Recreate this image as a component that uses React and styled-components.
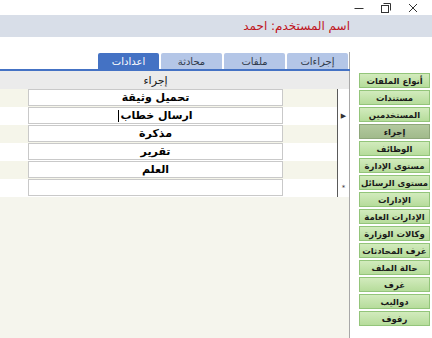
import styled, { createGlobalStyle } from "styled-components";

const GlobalStyle = createGlobalStyle`
  body {
    margin: 0;
    background: #ffffff;
  }
`;

const Window = styled.div`
  width: 432px;
  height: 338px;
  overflow: hidden;
  background: #ffffff;
  font-family: Tahoma, "DejaVu Sans", "Liberation Sans", sans-serif;
  display: flex;
  flex-direction: column;
`;

const TitleBar = styled.div`
  height: 15px;
  display: flex;
  justify-content: flex-end;
  align-items: center;
  padding-right: 14px;
  gap: 17px;
`;

const WinButton = styled.span`
  width: 10px;
  height: 10px;
  display: flex;
  align-items: center;
  justify-content: center;
`;

const UserBar = styled.div`
  height: 22px;
  background: #d8dee8;
  display: flex;
  justify-content: flex-end;
  align-items: center;
  padding-right: 82px;
`;

const UserName = styled.span`
  direction: rtl;
  color: #c0141c;
  font-size: 12px;
`;

const Body = styled.div`
  margin-top: 15px;
  flex: 1;
  display: flex;
`;

const Main = styled.div`
  width: 349px;
  border-right: 1px solid #a8a8a8;
  display: flex;
  flex-direction: column;
  background: #f5f5ed;
`;

const TabRow = styled.div`
  height: 17px;
  background: #ffffff;
  display: flex;
  justify-content: flex-end;
  align-items: flex-end;
  gap: 2px;
  padding-right: 1px;
`;

const Tab = styled.div`
  width: 61px;
  height: 16px;
  border-radius: 2px 2px 0 0;
  background: ${(p) => (p.$active ? "#4472c4" : "#b4c6e7")};
  color: ${(p) => (p.$active ? "#ffffff" : "#2f3a4a")};
  font-size: 10px;
  direction: rtl;
  display: flex;
  align-items: center;
  justify-content: center;
`;

const BlueLine = styled.div`
  height: 2px;
  background: #4472c4;
  margin-right: -1px;
`;

const GridHeader = styled.div`
  height: 18px;
  background: #ebebeb;
  display: flex;
`;

const HeaderCell = styled.div`
  width: 311px;
  direction: rtl;
  font-size: 11px;
  color: #1a1a1a;
  display: flex;
  align-items: center;
  justify-content: center;
`;

const Row = styled.div`
  height: 18px;
  display: flex;
`;

const Cell = styled.div`
  width: 338px;
  background: ${(p) => (p.$odd ? "#f5f5ea" : "#ffffff")};
  border-right: 1px solid #5a5a5a;
  padding-left: 28px;
  box-sizing: border-box;
`;

const TextBox = styled.div`
  width: 255px;
  height: 17px;
  box-sizing: border-box;
  border: 1px solid #c9c9c9;
  background: #ffffff;
  direction: rtl;
  font-size: 11px;
  font-weight: bold;
  color: #000000;
  display: flex;
  align-items: center;
  justify-content: center;
`;

const Caret = styled.span`
  display: inline-block;
  width: 1px;
  height: 12px;
  background: #000000;
  margin-right: 1px;
`;

const RowHead = styled.div`
  flex: 1;
  background: #ffffff;
  display: flex;
  align-items: center;
  justify-content: center;
  font-size: 7px;
  color: #333333;
`;

const Sidebar = styled.div`
  width: 82px;
  padding: 21px 2px 0 9px;
  box-sizing: border-box;
  display: flex;
  flex-direction: column;
  gap: 2px;
`;

const NavButton = styled.div`
  height: 15px;
  box-sizing: border-box;
  border: 1px solid ${(p) => (p.$active ? "#8ea77a" : "#93c57a")};
  background: ${(p) =>
    p.$active
      ? "linear-gradient(#b3c99f, #a1ba8b)"
      : "linear-gradient(#d2ebbd, #b6dc9b)"};
  direction: rtl;
  font-size: 8.5px;
  font-weight: bold;
  color: #1a1a1a;
  display: flex;
  align-items: center;
  justify-content: center;
  white-space: nowrap;
  overflow: hidden;
`;

const tabs = ["اعدادات", "محادثة", "ملفات", "إجراءات"];

const rows = ["تحميل وثيقة", "ارسال خطاب", "مذكرة", "تقرير", "العلم", ""];

const nav = [
  "أنواع الملفات",
  "مستندات",
  "المستخدمين",
  "إجراء",
  "الوظائف",
  "مستوى الإدارة",
  "مستوى الرسائل",
  "الإدارات",
  "الإدارات العامة",
  "وكالات الوزارة",
  "غرف المحادثات",
  "حالة الملف",
  "غرف",
  "دواليب",
  "رفوف",
];

function WindowControls() {
  return (
    <TitleBar>
      <WinButton>
        <svg width="10" height="10" viewBox="0 0 10 10">
          <path d="M0.5 5.5h9" stroke="#333" strokeWidth="1" />
        </svg>
      </WinButton>
      <WinButton>
        <svg width="10" height="10" viewBox="0 0 10 10" fill="none">
          <path d="M2.5 0.5h7v7" stroke="#333" strokeWidth="1" />
          <rect x="0.5" y="2.5" width="7" height="7" stroke="#333" strokeWidth="1" />
        </svg>
      </WinButton>
      <WinButton>
        <svg width="10" height="10" viewBox="0 0 10 10">
          <path d="M1 1l8 8M9 1l-8 8" stroke="#333" strokeWidth="1" />
        </svg>
      </WinButton>
    </TitleBar>
  );
}

function App() {
  return (
    <Window>
      <GlobalStyle />
      <WindowControls />
      <UserBar>
        <UserName>اسم المستخدم: احمد</UserName>
      </UserBar>
      <Body>
        <Main>
          <TabRow>
            {tabs.map((t, i) => (
              <Tab key={t} $active={i === 0}>
                {t}
              </Tab>
            ))}
          </TabRow>
          <BlueLine />
          <GridHeader>
            <HeaderCell>إجراء</HeaderCell>
          </GridHeader>
          {rows.map((r, i) => (
            <Row key={i}>
              <Cell $odd={i % 2 === 0}>
                <TextBox>
                  {r}
                  {i === 1 && <Caret />}
                </TextBox>
              </Cell>
              <RowHead>{i === 1 ? "▶" : i === rows.length - 1 ? "*" : ""}</RowHead>
            </Row>
          ))}
        </Main>
        <Sidebar>
          {nav.map((n) => (
            <NavButton key={n} $active={n === "إجراء"}>
              {n}
            </NavButton>
          ))}
        </Sidebar>
      </Body>
    </Window>
  );
}

export default App;
